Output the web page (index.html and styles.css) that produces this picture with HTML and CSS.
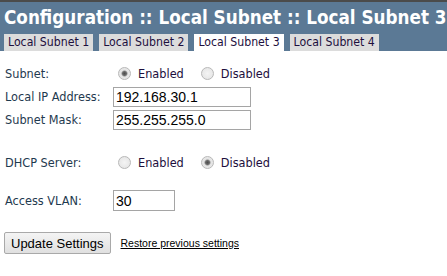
FILE: index.html
```html
<!DOCTYPE html>
<html lang="en">
<head>
    <meta charset="UTF-8">
    <title>Configuration :: Local Subnet :: Local Subnet 3</title>
    <link rel="stylesheet" href="styles.css">
</head>
<body>
    <div class="header">
        <h1>Configuration :: Local Subnet :: Local Subnet 3</h1>
        <div class="tabs">
            <a class="tab" href="#">Local Subnet 1</a>
            <a class="tab" href="#">Local Subnet 2</a>
            <a class="tab active" href="#">Local Subnet 3</a>
            <a class="tab" href="#">Local Subnet 4</a>
        </div>
    </div>

    <form class="settings">
        <div class="row first">
            <label class="label">Subnet:</label>
            <div class="field">
                <label class="choice"><input type="radio" name="subnet" checked> Enabled</label>
                <label class="choice"><input type="radio" name="subnet"> Disabled</label>
            </div>
        </div>
        <div class="row">
            <label class="label">Local IP Address:</label>
            <div class="field"><input class="text wide" type="text" value="192.168.30.1"></div>
        </div>
        <div class="row">
            <label class="label">Subnet Mask:</label>
            <div class="field"><input class="text wide" type="text" value="255.255.255.0"></div>
        </div>
        <div class="row dhcp">
            <label class="label">DHCP Server:</label>
            <div class="field">
                <label class="choice"><input type="radio" name="dhcp"> Enabled</label>
                <label class="choice"><input type="radio" name="dhcp" checked> Disabled</label>
            </div>
        </div>
        <div class="row vlan">
            <label class="label">Access VLAN:</label>
            <div class="field"><input class="text short" type="text" value="30"></div>
        </div>
        <div class="actions">
            <button type="button" class="update">Update Settings</button>
            <a href="#" class="restore">Restore previous settings</a>
        </div>
    </form>
</body>
</html>
```

FILE: styles.css
```css
body {
    margin: 0;
    font-family: "DejaVu Sans Condensed", "DejaVu Sans", sans-serif;
    background-color: #fff;
    color: #1f3a4f;
}

.header {
    background-color: #5b7995;
    border-top: 2px solid #4b4b4b;
    padding: 0 4px;
}

.header h1 {
    margin: 0;
    color: #fff;
    font-size: 18.7px;
    font-weight: bold;
    line-height: 32px;
    white-space: nowrap;
}

.tabs {
    display: flex;
    gap: 6px;
}

.tab {
    background-color: #dcdcdc;
    color: #1d0f3d;
    font-size: 12.2px;
    line-height: 17px;
    padding: 0 4px;
    text-decoration: none;
}

.tab.active {
    background-color: #fff;
}

.settings {
    padding: 0 5px;
    font-size: 12.6px;
}

.row {
    display: flex;
    align-items: center;
    min-height: 23px;
}

.row.first {
    margin-top: 11px;
}

.row.dhcp {
    margin-top: 20px;
}

.row.vlan {
    margin-top: 15px;
}

.label {
    width: 108px;
    flex-shrink: 0;
}

.field {
    display: flex;
    align-items: center;
}

.choice {
    display: flex;
    align-items: center;
    gap: 7px;
    margin-left: 5px;
    margin-right: 12px;
    color: #1d0f3d;
}

.choice input {
    appearance: none;
    -webkit-appearance: none;
    width: 13px;
    height: 13px;
    margin: 0;
    border: 1px solid #b8b8b8;
    border-radius: 50%;
    background: radial-gradient(circle, #f4f4f4 0%, #e2e2e2 100%);
}

.choice input:checked {
    background: radial-gradient(circle, #4d4d4d 0px, #6a6a6a 2px, #e4e4e4 3.5px, #ececec 100%);
}

.text {
    font-family: "Liberation Sans", Arial, sans-serif;
    font-size: 14px;
    color: #000;
    height: 20px;
    box-sizing: border-box;
    border: 1px solid #a5a5a5;
    padding: 0 2px;
    margin: 0;
}

.text.wide {
    width: 138px;
}

.text.short {
    width: 62px;
    height: 21px;
}

.actions {
    display: flex;
    align-items: center;
    gap: 10px;
    margin-top: 20px;
    margin-left: -1px;
}

.update {
    font-family: "Liberation Sans", Arial, sans-serif;
    font-size: 13px;
    color: #000;
    height: 22px;
    padding: 0 6px;
    border: 1px solid #a9a9a9;
    border-radius: 2px;
    background: linear-gradient(#f4f4f4, #e0e0e0);
}

.restore {
    font-family: "Liberation Sans", Arial, sans-serif;
    font-size: 10.5px;
    color: #000;
}
```
